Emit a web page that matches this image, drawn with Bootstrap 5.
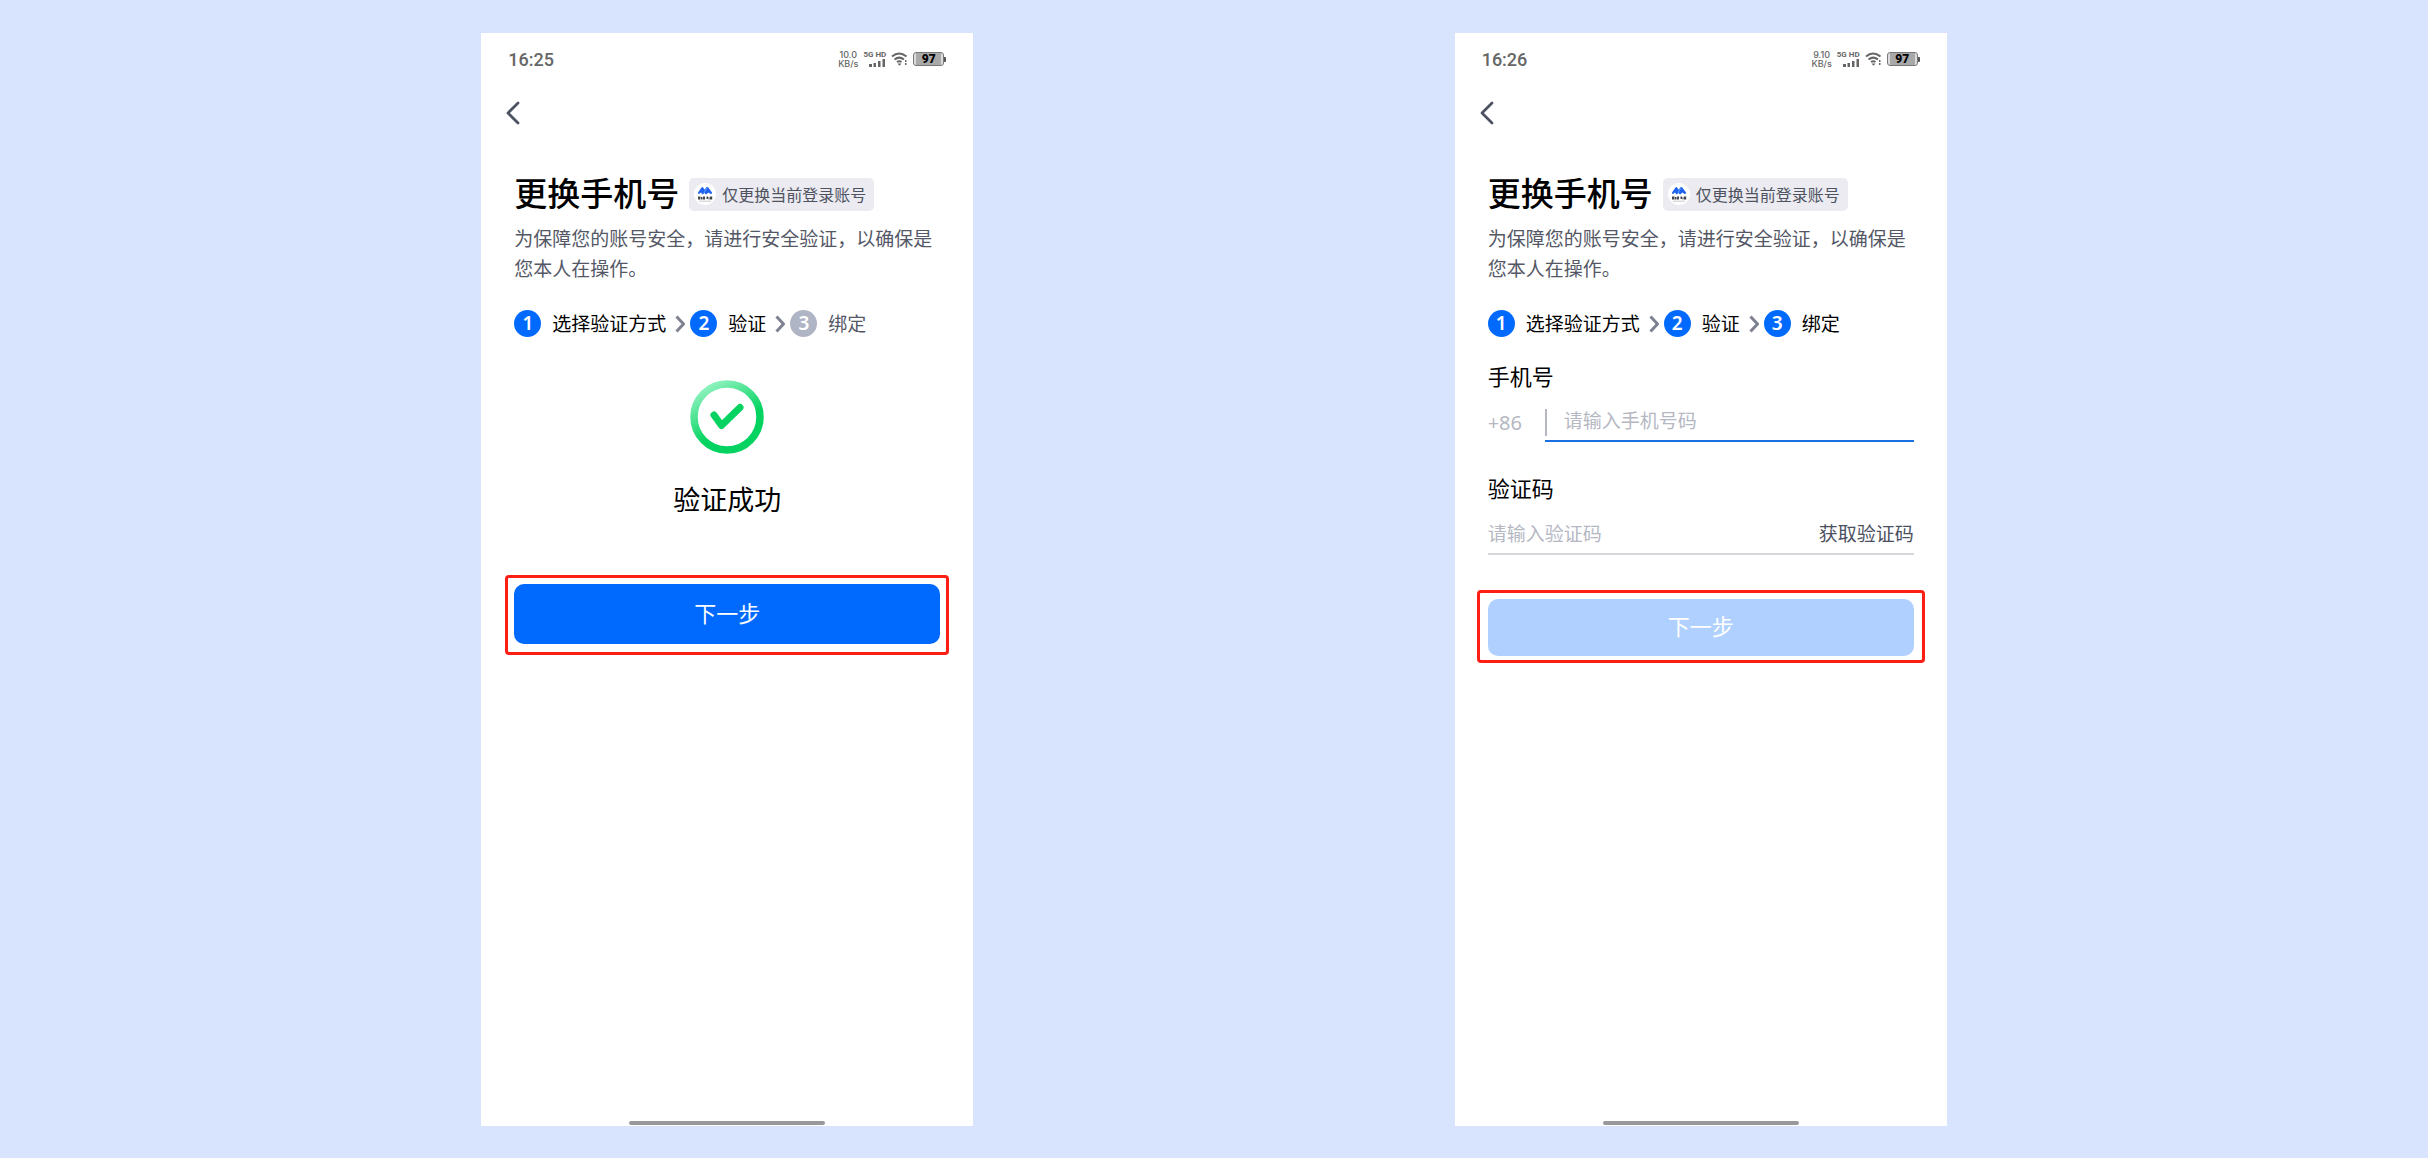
<!DOCTYPE html>
<html lang="zh-CN">
<head>
<meta charset="utf-8">
<meta name="viewport" content="width=device-width, initial-scale=1">
<title>更换手机号</title>
<link href="https://cdn.jsdelivr.net/npm/bootstrap@5.3.0/dist/css/bootstrap.min.css" rel="stylesheet">
<style>
  body { background: #d8e3fe; font-family: "Noto Sans CJK SC", sans-serif; color: #000; padding: 33px 0 32px; }
  .phone { width: 100%; max-width: 492px; background: #fff; }
  .status { height: 52px; padding: 0 27px; color: #666; font-family: Roboto, sans-serif; }
  .clock { font-size: 18px; font-weight: 500; }
  .status-right { gap: 5px; }
  .rate { font: 500 9px/9px Inter, sans-serif; text-align: center; }
  .net { font-size: 8px; line-height: 8px; font-weight: 700; }
  .battery { width: 31px; height: 14px; border: 1px solid #777; border-radius: 3px; background: linear-gradient(90deg, #ddd 2px, #a9a9a9 2px, #a9a9a9 27px, #ddd 27px); color: #000; font: 900 12px/12px Roboto, sans-serif; text-align: center; }
  .battery-tip { width: 2px; height: 5px; background: #555; border-radius: 0 1px 1px 0; }
  .topbar { height: 56px; padding-left: 25px; }
  .screen { padding: 37px 33px 0; }
  .title-row { gap: 10px; height: 33px; }
  .page-title { font-size: 33px; line-height: 33px; font-weight: 500; padding-bottom: 4px; }
  .account-tag { height: 33px; gap: 6px; padding: 0 8px 2px 5px; border-radius: 5px; background: #ebebf1; color: #4f5361; font-size: 16px; }
  .intro { margin: 12px 0 27px; font-size: 19px; line-height: 30px; color: #545866; }
  .steps { font-size: 19px; line-height: 25px; }
  .step { gap: 11px; }
  .step-no { width: 27px; height: 27px; line-height: 27px; border-radius: 50%; background: #006aff; color: #fff; text-align: center; font-family: "Noto Sans", sans-serif; font-weight: 600; }
  .step.todo { color: #545866; }
  .step.todo .step-no { background: #b0b5c6; }
  .step-arrow { margin: 0 5px 0 9px; }
  .result { padding-top: 43px; font-size: 27px; line-height: 38px; gap: 26px; }
  .callout { border: 3px solid #ff1e14; border-radius: 4px; }
  .callout-done { margin: 57px -9px 0; padding: 6px 6px 8px; }
  .callout-form { margin: 35px -11px 0; padding: 6px 8px 4px; }
  .btn-next { --bs-btn-bg: #006aff; --bs-btn-border-color: #006aff; --bs-btn-disabled-bg: #b0d1ff; --bs-btn-disabled-border-color: #b0d1ff; --bs-btn-disabled-color: #fff; --bs-btn-disabled-opacity: 1; --bs-btn-color: #fff; border-radius: 10px; border: 0; font-size: 22px; line-height: 33px; }
  .callout-done .btn-next { padding: 12px 0 15px; }
  .callout-form .btn-next { padding: 10px 0 14px; }
  .field-label { font-size: 22px; line-height: 30px; display: block; }
  .label-phone { margin-top: 23px; }
  .label-code { margin-top: 30px; }
  .phone-row { margin-top: 19px; font-size: 19px; line-height: 27px; }
  .prefix { width: 57px; color: #b5b8c3; font: 400 20px/27px "Noto Sans", sans-serif; }
  .phone-box { border-bottom: 2px solid #1c6fe0; padding-bottom: 4px; }
  .divider { width: 2px; height: 27px; background: #b5b8c3; }
  .code-row { margin-top: 16px; padding-bottom: 5px; border-bottom: 2px solid #d6d6da; font-size: 19px; }
  .field-input { border: 0; outline: 0; padding: 0; background: none; min-width: 0; line-height: 22px; height: 22px; }
  .phone-box .field-input { padding-left: 17px; }
  .field-input::placeholder { color: #b5b8c3; opacity: 1; }
  .btn-code { border: 0; padding: 0; font-size: 19px; line-height: 30px; color: #4b4f5e; }
  .home-bar { width: 196px; height: 4px; border-radius: 2px; background: #999; margin-bottom: 1px; }
</style>
<script src="https://cdn.jsdelivr.net/npm/bootstrap@5.3.0/dist/js/bootstrap.bundle.min.js"></script>
</head>
<body class="min-vh-100 d-flex flex-wrap justify-content-evenly align-items-stretch">

<svg class="d-none" aria-hidden="true">
  <symbol id="signal" viewBox="0 0 17 8"><path fill="#666" d="M0 5h3v3H0zM4.500 4h2.500v4H4.500zM9 2h2.500v6H9zM13.500 0H16v8h-2.500z"/></symbol>
  <symbol id="wifi" viewBox="0 0 17 14">
    <path d="M1 4.500Q8 -1.500 15.500 4.500M3.500 7.500Q8.200 3.800 13 7.500M6 10Q8.300 8.400 10.500 10" fill="none" stroke="#666" stroke-width="2"/>
    <path d="M6.500 11.500h4L8.500 13.800zM14 8l1.500 0v2H14zM14 11h1.500v2H14z" fill="#666"/>
  </symbol>
  <symbol id="back" viewBox="0 0 14 24"><path d="M12 2L2 12l10 10" fill="none" stroke="#4d5263" stroke-width="2.800" stroke-linecap="round" stroke-linejoin="round"/></symbol>
  <symbol id="next" viewBox="0 0 10 18"><path d="M1.500 1.500L8.500 9l-7 7.500" fill="none" stroke="#7d8190" stroke-width="3" stroke-linejoin="round"/></symbol>
  <symbol id="brand" viewBox="0 0 22 22">
    <circle cx="11" cy="11" r="11" fill="#fff"/>
    <path d="M4 9.500L7.500 4.500Q8.500 3.500 9.500 5l1.200 1.800L12.500 4.300Q13.500 3.300 14.500 4.800L18 9.500Q18 11.500 16.500 11L14.500 9.500 12 11.500 10.500 10 8.500 11.500 7 9.500 5 11Q4 11 4 9.500z" fill="#1f62ee"/>
    <path d="M9.200 9.800L12.500 4.300Q13 4 13.800 4.500L10.800 10z" fill="#4b8dfb"/>
    <path d="M4 13.500h2.500v3H4zM7 14h1.500v2.500H7zM9 13.500h2v3H9zM12.500 13.500H14V16h-1.500zM14.500 14h1v2.500h-1zM16 13.500h2.200v3H16z" fill="#44464d"/>
    <path d="M5 18.200h12" stroke="#bbb" stroke-width=".8"/>
  </symbol>
</svg>

<main class="phone d-flex flex-column">
  <div class="status d-flex align-items-center justify-content-between">
    <span class="clock">16:25</span>
    <div class="status-right d-flex align-items-center">
      <div class="rate">10.0<br>KB/s</div>
      <div class="net d-flex flex-column align-items-end"><span>5G HD</span><svg width="17" height="8"><use href="#signal"/></svg></div>
      <svg width="17" height="14"><use href="#wifi"/></svg>
      <div class="d-flex align-items-center"><div class="battery">97</div><div class="battery-tip"></div></div>
    </div>
  </div>
  <div class="topbar d-flex align-items-center">
    <button type="button" class="btn border-0 p-0 d-flex" aria-label="返回"><svg width="14" height="24"><use href="#back"/></svg></button>
  </div>
  <div class="screen">
    <div class="title-row d-flex align-items-center">
      <h1 class="page-title m-0">更换手机号</h1>
      <span class="account-tag d-flex align-items-center"><svg width="22" height="22"><use href="#brand"/></svg>仅更换当前登录账号</span>
    </div>
    <p class="intro">为保障您的账号安全，请进行安全验证，以确保是您本人在操作。</p>
    <ol class="steps list-unstyled d-flex align-items-center m-0">
      <li class="step d-flex"><span class="step-no">1</span>选择验证方式</li>
      <li class="step-arrow d-flex" aria-hidden="true"><svg width="10" height="18"><use href="#next"/></svg></li>
      <li class="step d-flex"><span class="step-no">2</span>验证</li>
      <li class="step-arrow d-flex" aria-hidden="true"><svg width="10" height="18"><use href="#next"/></svg></li>
      <li class="step todo d-flex"><span class="step-no">3</span>绑定</li>
    </ol>
    <div class="result d-flex flex-column align-items-center">
      <svg width="74" height="74" viewBox="0 0 74 74">
        <defs><linearGradient id="ring" x1=".25" y1="0" x2=".6" y2=".62"><stop offset="0" stop-color="#8df3bd"/><stop offset=".15" stop-color="#7aedb0"/><stop offset="1" stop-color="#04d361"/></linearGradient></defs>
        <circle cx="37" cy="37" r="33" fill="none" stroke="url(#ring)" stroke-width="7.500"/>
        <path d="M24 35l7.500 10.500L50 27.500" fill="none" stroke="#04d361" stroke-width="7" stroke-linecap="round" stroke-linejoin="round"/>
      </svg>
      <span>验证成功</span>
    </div>
    <div class="callout callout-done"><button type="button" class="btn btn-next w-100 d-block">下一步</button></div>
  </div>
  <div class="home-bar mt-auto mx-auto"></div>
</main>

<main class="phone d-flex flex-column">
  <div class="status d-flex align-items-center justify-content-between">
    <span class="clock">16:26</span>
    <div class="status-right d-flex align-items-center">
      <div class="rate">9.10<br>KB/s</div>
      <div class="net d-flex flex-column align-items-end"><span>5G HD</span><svg width="17" height="8"><use href="#signal"/></svg></div>
      <svg width="17" height="14"><use href="#wifi"/></svg>
      <div class="d-flex align-items-center"><div class="battery">97</div><div class="battery-tip"></div></div>
    </div>
  </div>
  <div class="topbar d-flex align-items-center">
    <button type="button" class="btn border-0 p-0 d-flex" aria-label="返回"><svg width="14" height="24"><use href="#back"/></svg></button>
  </div>
  <form class="screen">
    <div class="title-row d-flex align-items-center">
      <h1 class="page-title m-0">更换手机号</h1>
      <span class="account-tag d-flex align-items-center"><svg width="22" height="22"><use href="#brand"/></svg>仅更换当前登录账号</span>
    </div>
    <p class="intro">为保障您的账号安全，请进行安全验证，以确保是您本人在操作。</p>
    <ol class="steps list-unstyled d-flex align-items-center m-0">
      <li class="step d-flex"><span class="step-no">1</span>选择验证方式</li>
      <li class="step-arrow d-flex" aria-hidden="true"><svg width="10" height="18"><use href="#next"/></svg></li>
      <li class="step d-flex"><span class="step-no">2</span>验证</li>
      <li class="step-arrow d-flex" aria-hidden="true"><svg width="10" height="18"><use href="#next"/></svg></li>
      <li class="step d-flex"><span class="step-no">3</span>绑定</li>
    </ol>
    <label class="field-label label-phone" for="phone">手机号</label>
    <div class="phone-row d-flex align-items-start">
      <span class="prefix">+86</span>
      <div class="phone-box d-flex flex-fill">
        <span class="divider"></span>
        <input class="field-input flex-fill" id="phone" type="tel" placeholder="请输入手机号码">
      </div>
    </div>
    <label class="field-label label-code" for="code">验证码</label>
    <div class="code-row d-flex align-items-center">
      <input class="field-input flex-fill" id="code" type="text" placeholder="请输入验证码">
      <button type="button" class="btn btn-code">获取验证码</button>
    </div>
    <div class="callout callout-form"><button type="submit" class="btn btn-next w-100 d-block" disabled>下一步</button></div>
  </form>
  <div class="home-bar mt-auto mx-auto"></div>
</main>
</body>
</html>
